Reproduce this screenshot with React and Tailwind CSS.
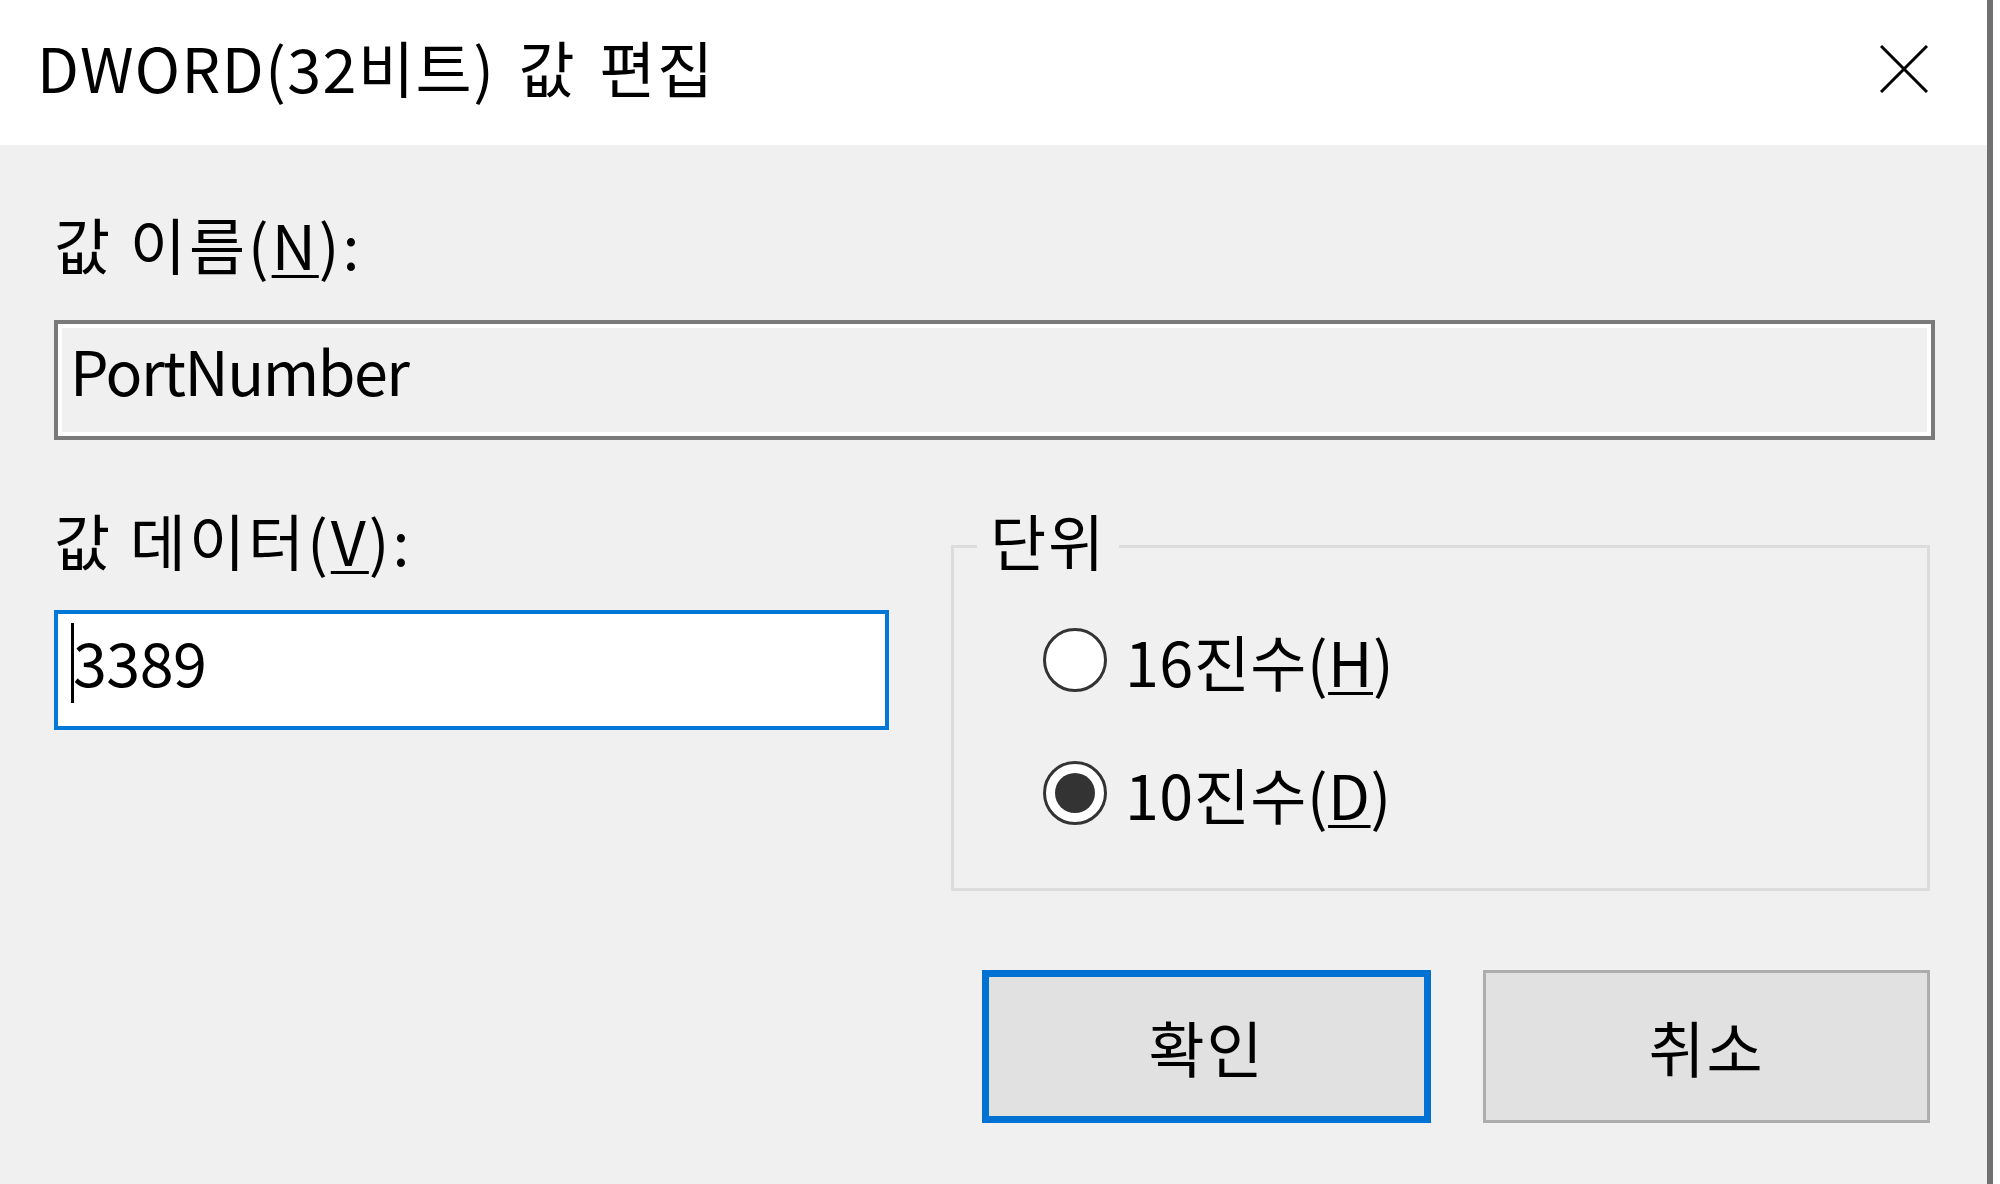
import React from 'react';

const FONT = "font-['Noto_Sans_CJK_KR','Noto_Sans_CJK_SC',sans-serif]";

function Mnemonic({ children }) {
  return <span className="underline decoration-[3px] underline-offset-[5px]">{children}</span>;
}

function Radio({ checked, label, keyChar }) {
  return (
    <div className="flex items-center gap-[18px]">
      <div className="flex h-[64px] w-[64px] items-center justify-center rounded-full border-[3px] border-[#333333] bg-white">
        {checked && <div className="h-[40px] w-[40px] rounded-full bg-[#333333]" />}
      </div>
      <span className="tracking-[0.5px]">
        {label}(<Mnemonic>{keyChar}</Mnemonic>)
      </span>
    </div>
  );
}

export default function App() {
  return (
    <div className={`flex h-[1184px] w-full bg-white text-[61px] leading-[61px] text-black ${FONT}`}>
      {/* dialog */}
      <div className="flex w-[1987px] flex-col">
        {/* title bar */}
        <div className="flex h-[145px] shrink-0 items-start justify-between bg-white pl-[37px] pr-[59px]">
          <div className="mt-[36px] whitespace-nowrap tracking-[1.5px] [word-spacing:8px]">DWORD(32비트) 값 편집</div>
          <svg className="mt-[45px]" width="48" height="48" viewBox="0 0 48 48">
            <path d="M1 1 L47 47 M47 1 L1 47" stroke="#000" strokeWidth="3" fill="none" />
          </svg>
        </div>

        {/* body */}
        <div className="flex flex-1 flex-col bg-[#f0f0f0] pl-[54px] pr-[52px]">
          <div className="mt-[68px] tracking-[3px]">
            값 이름(<Mnemonic>N</Mnemonic>):
          </div>
          <div className="mt-[46px] h-[120px] border-4 border-[#7a7a7a] bg-[#f0f0f0] pl-[12px] pt-[15px] tracking-[-1.5px] shadow-[inset_0_0_0_4px_#ffffff]">
            PortNumber
          </div>

          <div className="mt-[69px] flex items-start gap-[62px]">
            <div className="flex w-[835px] flex-col">
              <div className="tracking-[3px]">
                값 데이터(<Mnemonic>V</Mnemonic>):
              </div>
              <div className="relative mt-[40px] h-[120px] border-4 border-[#0078d7] bg-white pl-[15px] pt-[16px] tracking-[-0.5px]">
                <div className="absolute left-[13px] top-[9px] h-[80px] w-[3px] bg-black" />
                3389
              </div>
            </div>

            <fieldset className="mr-[5px] flex-1 border-[3px] border-[#dcdcdc] pb-[63px]">
              <legend className="ml-[23px] px-[13px] pb-[14px] tracking-[2px]">단위</legend>
              <div className="mt-[44px] flex flex-col gap-[69px] pl-[89px]">
                <Radio label="16진수" keyChar="H" />
                <Radio checked label="10진수" keyChar="D" />
              </div>
            </fieldset>
          </div>

          <div className="mr-[5px] mt-[79px] flex justify-end gap-[52px]">
            <button className="flex h-[153px] w-[449px] items-center justify-center border-[7px] border-[#0072d4] bg-[#e1e1e1] tracking-[2px]">
              확인
            </button>
            <button className="flex h-[153px] w-[447px] items-center justify-center border-[3px] border-[#adadad] bg-[#e1e1e1] tracking-[2px]">
              취소
            </button>
          </div>
        </div>
      </div>

      {/* window edge */}
      <div className="w-[6px] shrink-0 bg-[#707070]" />
      <div className="flex-1 bg-white" />
    </div>
  );
}
